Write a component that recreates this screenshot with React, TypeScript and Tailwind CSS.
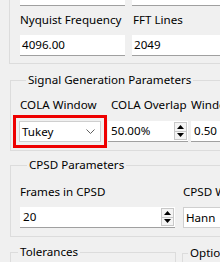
import type { ReactNode } from 'react';

function TextBox({ value, className = '' }: { value: string; className?: string }) {
  return (
    <div className={`h-[21px] bg-white border-b border-[#a0a0a0] pl-[2px] leading-[20px] ${className}`}>
      {value}
    </div>
  );
}

function Spin() {
  return (
    <div className="flex flex-col w-[13px] h-[18px] border border-[#c8c8c8] bg-[#f4f4f4]">
      <div className="flex-1 flex items-center justify-center border-b border-[#c8c8c8]">
        <svg width="7" height="4" viewBox="0 0 7 4">
          <path d="M0 4 L3.5 0 L7 4Z" fill="#000" />
        </svg>
      </div>
      <div className="flex-1 flex items-center justify-center">
        <svg width="7" height="4" viewBox="0 0 7 4">
          <path d="M0 0 L7 0 L3.5 4Z" fill="#000" />
        </svg>
      </div>
    </div>
  );
}

function NumericBox({ value, className = '' }: { value: string; className?: string }) {
  return (
    <div className={`h-[21px] bg-white border-b border-[#a0a0a0] flex items-start ${className}`}>
      <span className="flex-1 pl-[3px] leading-[20px]">{value}</span>
      <div className="pt-[1px] pr-[1px]">
        <Spin />
      </div>
    </div>
  );
}

function Combo({ value, chevron = true, className = '' }: { value: string; chevron?: boolean; className?: string }) {
  return (
    <div className={`h-[21px] bg-white border border-[#cfcfcf] flex items-center ${className}`}>
      <span className="flex-1 pl-[2px] leading-[19px]">{value}</span>
      {chevron && (
        <svg width="9" height="5" viewBox="0 0 9 5" className="mr-[5px]">
          <path d="M0.5 0.5 L4.5 4.5 L8.5 0.5" fill="none" stroke="#606060" strokeWidth="1" />
        </svg>
      )}
    </div>
  );
}

function Group({ title, className = '', legendClass = 'ml-[7px]', children }: {
  title: string;
  className?: string;
  legendClass?: string;
  children?: ReactNode;
}) {
  return (
    <fieldset className={`border border-[#dcdcdc] ${className}`}>
      <legend className={`px-[2px] leading-[16px] ${legendClass}`}>{title}</legend>
      {children}
    </fieldset>
  );
}

export default function App() {
  return (
    <div className="w-[220px] h-[262px] overflow-hidden bg-[#f0f0f0] text-[11.6px] text-black font-['Noto_Sans',sans-serif]">
      {/* previous group, cut at the top */}
      <div className="ml-[9px] w-[400px] h-[64px] border-l border-b border-[#dcdcdc] pl-[10px]">
        <div className="grid grid-cols-[105px_200px] gap-x-[7px]">
          <div className="h-[6px] bg-white border-b border-[#a0a0a0]" />
          <div className="h-[6px] bg-white border-b border-[#a0a0a0]" />
          <div className="mt-[6px] leading-[16px] whitespace-nowrap">Nyquist Frequency</div>
          <div className="mt-[6px] leading-[16px] pl-[1px]">FFT Lines</div>
          <TextBox value="4096.00" className="mt-[7px]" />
          <TextBox value="2049" className="mt-[7px]" />
        </div>
      </div>

      <Group title="Signal Generation Parameters" className="ml-[10px] mt-[8px] w-[400px] pl-[8px] pb-[8px]">
        <div className="grid grid-cols-[82px_80px_100px] gap-x-[7px] pt-[9px]">
          <div className="pl-[1px] leading-[16px] whitespace-nowrap">COLA Window</div>
          <div className="pl-[3px] leading-[16px] whitespace-nowrap">COLA Overlap</div>
          <div className="-ml-[4px] leading-[16px] whitespace-nowrap">Window</div>
          <Combo
            value="Tukey"
            className="mt-[8px] relative z-10 outline-[3px] outline-solid outline-offset-[3px] outline-[#ee0000]"
          />
          <NumericBox value="50.00%" className="mt-[8px]" />
          <TextBox value="0.50" className="mt-[8px] -ml-[4px] pl-[3px]" />
        </div>
      </Group>

      <Group title="CPSD Parameters" className="ml-[10px] mt-[6px] w-[400px] pl-[9px] pb-[8px]">
        <div className="grid grid-cols-[155px_100px] gap-x-[8px] pt-[11px]">
          <div className="leading-[16px] whitespace-nowrap">Frames in CPSD</div>
          <div className="leading-[16px] whitespace-nowrap">CPSD Window</div>
          <NumericBox value="20" className="mt-[7px]" />
          <Combo value="Hann" chevron={false} className="mt-[7px]" />
        </div>
      </Group>

      <div className="flex items-start mt-[7px] ml-[10px]">
        <Group title="Tolerances" className="shrink-0 w-[166px] h-[40px]" />
        <Group title="Options" legendClass="ml-[5px]" className="shrink-0 ml-[6px] mt-[1px] w-[100px] h-[40px]" />
      </div>
    </div>
  );
}
